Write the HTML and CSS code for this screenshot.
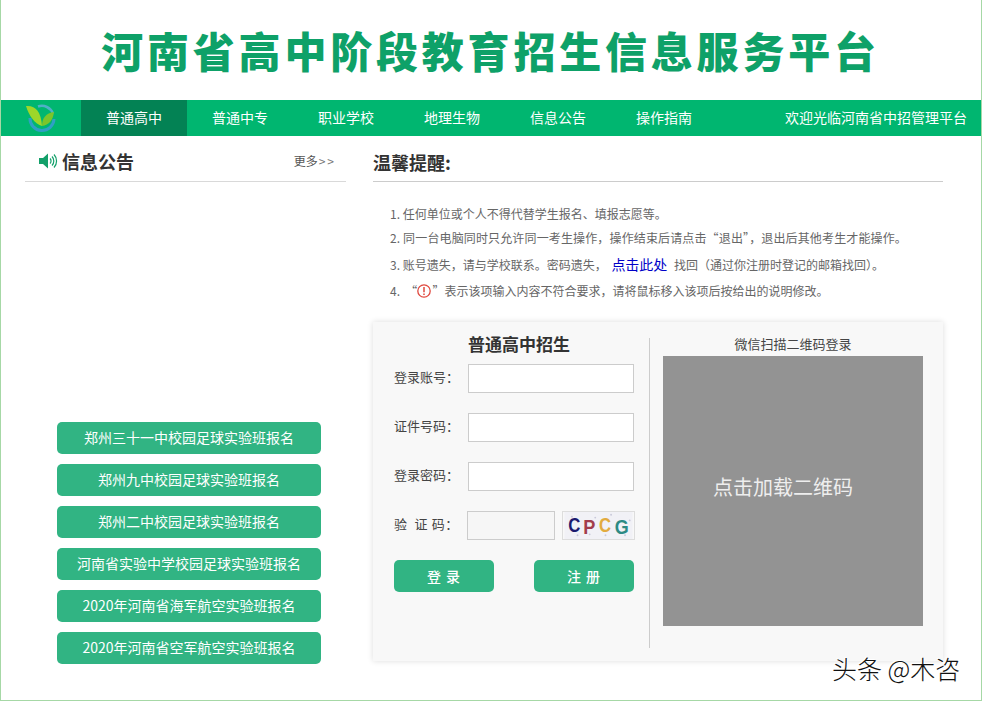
FILE: index.html
```html
<!DOCTYPE html>
<html lang="zh">
<head>
<meta charset="utf-8">
<title>河南省高中阶段教育招生信息服务平台</title>
<link rel="stylesheet" href="styles.css">
</head>
<body>
<div class="page">
  <header class="banner"><h1>河南省高中阶段教育招生信息服务平台</h1></header>
  <nav class="nav">
    <div class="logo">
      <svg width="30" height="30" viewBox="0 0 30 30">
        <path d="M4 15a12 12 0 0 0 24 1" fill="none" stroke="#2f9fc4" stroke-width="3"/>
        <path d="M12 3.500a12 12 0 0 1 15 7" fill="none" stroke="#4fb0c8" stroke-width="2.500"/>
        <path d="M0 3c9-1 15 5 16 20C9 21 3 13 0 3z" fill="#9ed62a"/>
        <path d="M16 23c0-8 4-13 12-14-1 8-5 13-12 14z" fill="#7cc52a"/>
      </svg>
    </div>
    <a class="nav-item active">普通高中</a>
    <a class="nav-item">普通中专</a>
    <a class="nav-item">职业学校</a>
    <a class="nav-item">地理生物</a>
    <a class="nav-item">信息公告</a>
    <a class="nav-item">操作指南</a>
    <span class="welcome">欢迎光临河南省中招管理平台</span>
  </nav>
  <main class="content">
    <section class="left">
      <div class="left-head">
        <svg class="speaker" width="19" height="16" viewBox="0 0 19 16">
          <path d="M0 5h4l5-4.500v15L4 11H0z" fill="#13a06a"/>
          <path d="M11 5.500a3.500 3.500 0 0 1 0 5M13 3.500a6.500 6.500 0 0 1 0 9M15 1.500a9.500 9.500 0 0 1 0 13" fill="none" stroke="#13a06a" stroke-width="1.200"/>
        </svg>
        <h2>信息公告</h2>
        <a class="more">更多<span class="chev">&gt;&gt;</span></a>
      </div>
      <div class="links">
        <a class="link-btn">郑州三十一中校园足球实验班报名</a>
        <a class="link-btn">郑州九中校园足球实验班报名</a>
        <a class="link-btn">郑州二中校园足球实验班报名</a>
        <a class="link-btn">河南省实验中学校园足球实验班报名</a>
        <a class="link-btn">2020年河南省海军航空实验班报名</a>
        <a class="link-btn">2020年河南省空军航空实验班报名</a>
      </div>
    </section>
    <section class="right">
      <h2 class="tips-head">温馨提醒:</h2>
      <ol class="tips">
        <li class="t1">1. 任何单位或个人不得代替学生报名、填报志愿等。</li>
        <li class="t2">2. 同一台电脑同时只允许同一考生操作，操作结束后请点击“退出”，退出后其他考生才能操作。</li>
        <li class="t3">3. 账号遗失，请与学校联系。密码遗失， <a class="here">点击此处</a> 找回（通过你注册时登记的邮箱找回）。</li>
        <li class="t4">4. &nbsp;“<svg class="warn" width="16" height="16" viewBox="0 0 16 16"><circle cx="8" cy="8" r="6.200" fill="none" stroke="#e0483e" stroke-width="1.300"/><path d="M8 4v5.200M8 10.600v1.400" stroke="#e0483e" stroke-width="1.500"/></svg>”表示该项输入内容不符合要求，请将鼠标移入该项后按给出的说明修改。</li>
      </ol>
      <div class="panel">
        <form class="login">
          <h3>普通高中招生</h3>
          <label class="row"><span class="lab">登录账号：</span><input class="inp" type="text"></label>
          <label class="row"><span class="lab">证件号码：</span><input class="inp" type="text"></label>
          <label class="row"><span class="lab">登录密码：</span><input class="inp" type="text"></label>
          <div class="row code-row">
            <span class="lab code-lab">验&nbsp; 证 码：</span>
            <input class="inp code" type="text">
            <svg class="captcha" width="73" height="29" viewBox="0 0 73 29">
              <rect width="73" height="29" fill="#f1f1f6"/>
              <g fill="#c9c9da">
                <circle cx="8" cy="5" r="1"/><circle cx="27" cy="24" r="1"/><circle cx="33" cy="6" r="1"/><circle cx="50" cy="3" r="1"/><circle cx="65" cy="25" r="1"/><circle cx="14" cy="25" r="1"/><circle cx="44" cy="25" r="1"/><circle cx="70" cy="9" r="1"/>
              </g>
              <text class="cc" x="4" y="22" textLength="13" lengthAdjust="spacingAndGlyphs" fill="#1c1a6e">C</text>
              <text class="cc" x="20" y="24" textLength="13" lengthAdjust="spacingAndGlyphs" fill="#a23d4c">P</text>
              <text class="cc" x="37" y="22" textLength="13" lengthAdjust="spacingAndGlyphs" fill="#e2ab3e">C</text>
              <text class="cc" x="54" y="24" textLength="15" lengthAdjust="spacingAndGlyphs" fill="#2d8a84">G</text>
            </svg>
          </div>
          <div class="btns">
            <button class="btn" type="button">登 录</button>
            <button class="btn" type="button">注 册</button>
          </div>
        </form>
        <div class="qr">
          <p class="qr-title">微信扫描二维码登录</p>
          <div class="qr-box">点击加载二维码</div>
        </div>
      </div>
    </section>
  </main>
  <div class="mark">头条 @木咨</div>
</div>
</body>
</html>
```

FILE: styles.css
```css
* { box-sizing: border-box; }
html, body { margin: 0; padding: 0; }
body { font-family: "Noto Sans CJK SC", "Liberation Sans", sans-serif; background: #fff; color: #333; }
.page { position: relative; width: 982px; height: 701px; border: 1px solid #a6d8a6; border-top: 0; overflow: hidden; }
.banner { height: 100px; display: flex; justify-content: center; padding-top: 20px; padding-right: 1px; }
.banner h1 { margin: 0; font-size: 42px; line-height: 60px; font-weight: 900; letter-spacing: 3.800px; color: #0ea168; white-space: nowrap; }
.nav { height: 36px; background: #00b670; display: flex; align-items: center; color: #fff; font-size: 14px; }
.logo { width: 80px; height: 36px; padding-left: 25px; display: flex; align-items: center; }
.nav-item { width: 106px; height: 36px; line-height: 34px; text-align: center; color: #fff; }
.nav-item.active { background: #038254; }
.welcome { margin-left: auto; margin-right: 14px; line-height: 34px; height: 36px; }
.content { display: flex; }
.left { width: 372px; padding-left: 24px; }
.left-head { width: 321px; height: 46px; border-bottom: 1px solid #d9d9d9; display: flex; align-items: center; padding-left: 14px; padding-top: 4px; }
.left-head h2 { margin: 0 0 0 4px; font-size: 18px; font-weight: 700; color: #333; }
.speaker { flex: none; }
.more { margin-left: auto; margin-right: 10px; font-size: 12px; color: #555; }
.chev { letter-spacing: 2px; margin-left: 1px; color: #777; }
.links { margin-top: 240px; margin-left: 32px; display: flex; flex-direction: column; gap: 10px; }
.link-btn { width: 264px; height: 32px; line-height: 30px; border-radius: 5px; background: #31b483; color: #fff; font-size: 14px; text-align: center; }
.right { width: 570px; }
.tips-head { margin: 0; height: 46px; border-bottom: 1px solid #ccc; font-size: 18px; font-weight: 700; line-height: 52px; color: #333; }
.tips { list-style: none; margin: 0; padding: 0 0 0 17px; font-size: 12px; color: #666; height: 140px; position: relative; }
.tips li { line-height: 18px; white-space: nowrap; }
.t1 { padding-top: 23px; }
.t2 { padding-top: 6px; letter-spacing: .14px; }
.t3 { padding-top: 8px; }
.t4 { padding-top: 8px; }
.here { color: #0000c8; font-size: 14px; padding: 0 4px 0 2px; }
.warn { vertical-align: -3px; margin-left: -1px; }
.panel { width: 570px; height: 339px; background: #f8f8f8; box-shadow: 0 0 6px rgba(0,0,0,.14); display: flex; }
.login { width: 277px; height: 310px; margin-top: 16px; border-right: 1px solid #ccc; padding-left: 21px; }
.login h3 { margin: 0; width: 250px; height: 26px; font-size: 17px; line-height: 12px; font-weight: 700; text-align: center; color: #333; }
.row { display: flex; align-items: center; height: 30px; margin-bottom: 19px; font-size: 13px; color: #444; }
.lab { width: 74px; flex: none; white-space: nowrap; line-height: 26px; height: 30px; }
.code-lab { letter-spacing: .6px; }
.inp { width: 166px; height: 29px; border: 1px solid #ccc; background: #fff; padding: 0; margin: 0 0 2px; }
.inp.code { width: 88px; height: 29px; margin-left: -1px; background: #f6f6f6; }
.captcha { margin-left: 7px; margin-bottom: 2px; border: 1px solid #ddd; flex: none; }
.cc { font-family: "Liberation Sans", sans-serif; font-size: 22px; font-weight: 700; }
.btns { display: flex; justify-content: space-between; width: 240px; }
.btn { width: 100px; height: 32px; border: 0; border-radius: 5px; background: #31b483; color: #fff; font: 500 14px "Noto Sans CJK SC", sans-serif; letter-spacing: 1px; padding: 0; }
.qr { margin-left: 13px; width: 260px; }
.qr-title { margin: 14px 0 0; height: 20px; font-size: 13px; line-height: 16px; text-align: center; color: #444; }
.qr-box { width: 260px; height: 270px; background: #939393; color: #eee; font-size: 20px; line-height: 262px; text-align: center; padding-right: 20px; }
.mark { position: absolute; left: 831px; top: 653px; font-size: 25px; font-weight: 300; line-height: 30px; color: #111; text-shadow: 1px 1px 0 #fff, -1px -1px 0 #fff; white-space: nowrap; }
```
